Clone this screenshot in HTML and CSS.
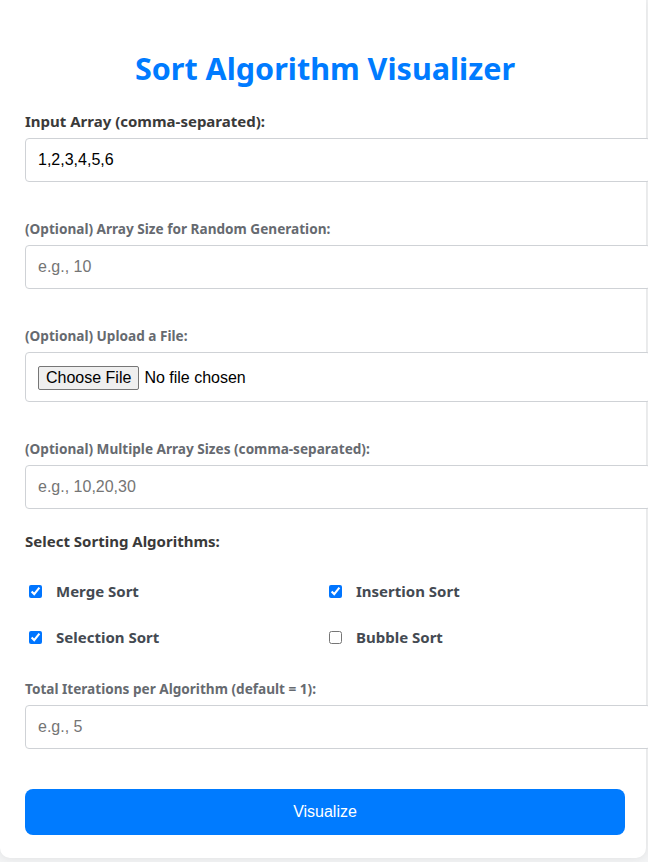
FILE: index.html
```html
<!DOCTYPE html>
<html lang="en">
<head>
<meta charset="utf-8">
<title>Sort Algorithm Visualizer</title>
<link rel="stylesheet" href="styles.css">
</head>
<body>
<div class="card">
  <h1 class="title">Sort Algorithm Visualizer</h1>

  <div class="group">
    <label class="label main" for="arr">Input Array (comma-separated):</label>
    <input class="field" id="arr" type="text" value="1,2,3,4,5,6">
  </div>

  <div class="group">
    <label class="label opt" for="size">(Optional) Array Size for Random Generation:</label>
    <input class="field" id="size" type="text" placeholder="e.g., 10">
  </div>

  <div class="group">
    <label class="label opt" for="file">(Optional) Upload a File:</label>
    <input class="field file" id="file" type="file">
  </div>

  <div class="group">
    <label class="label opt" for="sizes">(Optional) Multiple Array Sizes (comma-separated):</label>
    <input class="field" id="sizes" type="text" placeholder="e.g., 10,20,30">
  </div>

  <div class="algos">
    <div class="label main">Select Sorting Algorithms:</div>
    <div class="algo-grid">
      <label class="algo"><input type="checkbox" checked> <span>Merge Sort</span></label>
      <label class="algo"><input type="checkbox" checked> <span>Insertion Sort</span></label>
      <label class="algo"><input type="checkbox" checked> <span>Selection Sort</span></label>
      <label class="algo"><input type="checkbox"> <span>Bubble Sort</span></label>
    </div>
  </div>

  <div class="group last">
    <label class="label opt" for="iters">Total Iterations per Algorithm (default = 1):</label>
    <input class="field" id="iters" type="text" placeholder="e.g., 5">
  </div>

  <button class="btn" type="button">Visualize</button>
</div>
</body>
</html>
```

FILE: styles.css
```css
html, body {
  margin: 0;
  padding: 0;
  overflow: hidden;
  background: #f2f3f4;
}

body {
  font-family: "Noto Sans", "Open Sans", sans-serif;
  height: 862px;
}

.card {
  width: 646px;
  box-sizing: border-box;
  padding: 48px 21px 23px 25px;
  background: #ffffff;
  border-radius: 0 0 10px 10px;
  box-shadow: 0 0 8px rgba(0, 0, 0, 0.08);
}

.title {
  margin: 0 0 23px;
  text-align: center;
  color: #007bff;
  font-size: 30.5px;
  line-height: 40px;
  font-weight: 700;
}

.group {
  margin-bottom: 38px;
}

.group.last {
  margin-bottom: 40px;
}

.label {
  display: block;
  font-weight: 700;
}

.label.main {
  font-size: 15px;
  line-height: 20px;
  color: #3a3a3a;
  margin-bottom: 7px;
}

.label.opt {
  font-size: 13.6px;
  line-height: 17px;
  color: #666a70;
  margin-bottom: 8px;
}

.field {
  display: block;
  width: 100%;
  height: 20px;
  padding: 11px 12px;
  margin: 0;
  border: 1px solid #cfd2d6;
  border-radius: 4px;
  font-family: "Liberation Sans", Arial, sans-serif;
  font-size: 16px;
  color: #000;
  background: #fff;
}

.field::placeholder {
  color: #757575;
}

.field.file {
  height: 24px;
  padding: 12px;
  color: #000;
}

.field.file::file-selector-button {
  font-family: "Liberation Sans", Arial, sans-serif;
  font-size: 16px;
  color: #000;
  background: #efefef;
  border: 1px solid #767676;
  border-radius: 2px;
  padding: 1px 7px;
  margin: 1px 5px 0 0;
  height: 24px;
}

.algos {
  margin-top: -16px;
  margin-bottom: 33px;
}

.algos .label.main {
  margin-bottom: 30px;
}

.algo-grid {
  display: grid;
  grid-template-columns: 300px 300px;
  row-gap: 26px;
}

.algo {
  display: flex;
  align-items: center;
  height: 20px;
  font-size: 15px;
  font-weight: 700;
  color: #444a52;
}

.algo input {
  width: 13px;
  height: 13px;
  margin: 0 14px 0 4px;
}

.btn {
  display: block;
  width: 600px;
  height: 46px;
  border: 0;
  border-radius: 8px;
  background: #007bff;
  color: #fff;
  font-family: "Liberation Sans", Arial, sans-serif;
  font-size: 16px;
}
```
